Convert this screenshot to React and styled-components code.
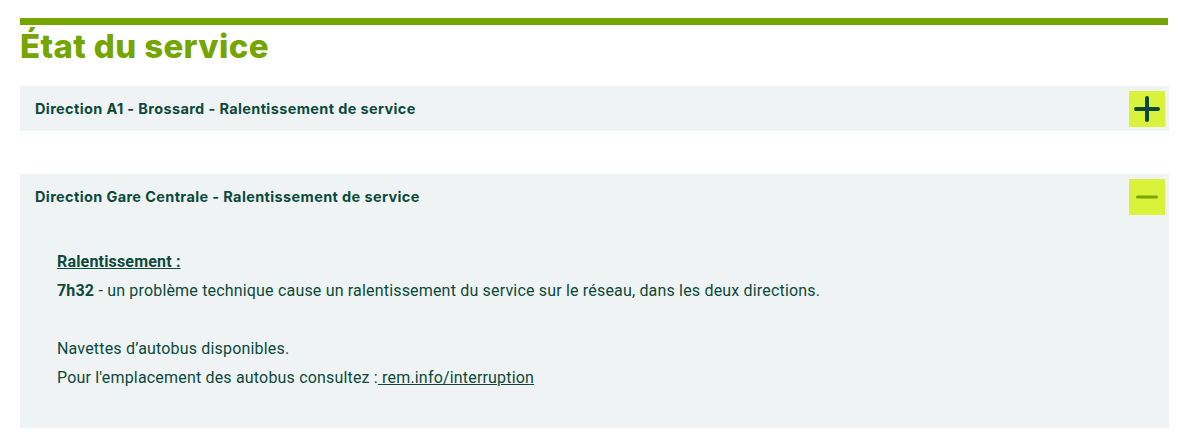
import React, { useState } from "react";
import styled, { createGlobalStyle } from "styled-components";

const GlobalStyle = createGlobalStyle`
  body {
    margin: 0;
    background: #ffffff;
    font-family: Roboto, "Liberation Sans", sans-serif;
  }
`;

const items = [
  {
    id: "a1",
    title: "Direction A1 - Brossard - Ralentissement de service",
  },
  {
    id: "gc",
    title: "Direction Gare Centrale - Ralentissement de service",
  },
];

const PlusIcon = () => (
  <svg width="26" height="26" viewBox="0 0 26 26">
    <path d="M13 2v22M2 13h22" stroke="#0b4a3b" strokeWidth="4" strokeLinecap="round" />
  </svg>
);

const MinusIcon = () => (
  <svg width="22" height="4" viewBox="0 0 22 4">
    <path d="M1.5 2h19" stroke="#7aa400" strokeWidth="3" strokeLinecap="round" />
  </svg>
);

const App = () => {
  const [open, setOpen] = useState({ a1: false, gc: true });
  const toggle = (id) => setOpen((o) => ({ ...o, [id]: !o[id] }));

  return (
    <Page>
      <GlobalStyle />
      <Heading>État du service</Heading>
      <List>
        {items.map((item) => (
          <Panel key={item.id}>
            <PanelHead>
              <PanelTitle>{item.title}</PanelTitle>
              <ToggleBtn type="button" onClick={() => toggle(item.id)}>
                {open[item.id] ? <MinusIcon /> : <PlusIcon />}
              </ToggleBtn>
            </PanelHead>
            {open[item.id] && item.id === "gc" && (
              <PanelBody>
                <p>
                  <Label>Ralentissement :</Label>
                  <br />
                  <strong>7h32</strong> - un problème technique cause un
                  ralentissement du service sur le réseau, dans les deux
                  directions.
                </p>
                <p>
                  Navettes d’autobus disponibles.
                  <br />
                  Pour l'emplacement des autobus consultez :
                  <a href="#interruption"> rem.info/interruption</a>
                </p>
              </PanelBody>
            )}
          </Panel>
        ))}
      </List>
    </Page>
  );
};

const Page = styled.div`
  padding: 18px 21px 18px 20px;
`;

const Heading = styled.h1`
  margin: 0 1px 0 0;
  border-top: 7px solid #74a500;
  padding-top: 2px;
  font-family: Inter, "Noto Sans", sans-serif;
  font-weight: 800;
  font-size: 33px;
  letter-spacing: 0.35px;
  line-height: 38px;
  color: #74a500;
`;

const List = styled.div`
  display: flex;
  flex-direction: column;
  gap: 43px;
  margin-top: 21px;
`;

const Panel = styled.section`
  background: #eff3f4;
`;

const PanelHead = styled.div`
  display: flex;
  align-items: center;
  justify-content: space-between;
  height: 45px;
  padding: 0 4px 0 15px;
`;

const PanelTitle = styled.h3`
  margin: 0;
  font-family: Inter, "Noto Sans", sans-serif;
  font-weight: 700;
  font-size: 14.5px;
  letter-spacing: 0.37px;
  color: #0b4a3b;
`;

const ToggleBtn = styled.button`
  display: flex;
  align-items: center;
  justify-content: center;
  width: 36px;
  height: 36px;
  padding: 0;
  border: 0;
  background: #d9f23a;
  cursor: pointer;
`;

const PanelBody = styled.div`
  padding: 28px 37px 36px;
  font-size: 16px;
  letter-spacing: 0.18px;
  line-height: 29px;
  color: #0b4a3b;

  p {
    margin: 0;
  }

  p + p {
    margin-top: 29px;
  }

  strong {
    font-weight: 700;
  }

  a {
    color: #0b4a3b;
    text-decoration: underline;
  }
`;

const Label = styled.strong`
  text-decoration: underline;
`;

export default App;
